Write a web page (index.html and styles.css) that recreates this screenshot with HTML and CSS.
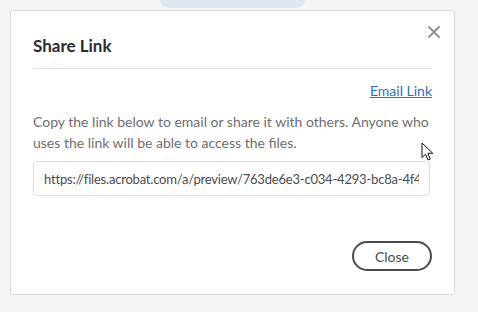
FILE: index.html
```html
<!DOCTYPE html>
<html lang="en">
<head>
    <meta charset="UTF-8">
    <title>Share Link</title>
    <link rel="stylesheet" href="styles.css">
</head>
<body>
    <div class="page">
        <div class="top-pill"></div>

        <div class="dialog">
            <button class="dialog-close" aria-label="Close">
                <svg width="12" height="12" viewBox="0 0 12 12">
                    <path d="M1 1L11 11M11 1L1 11" stroke="#8e8e8e" stroke-width="1.8" stroke-linecap="round" />
                </svg>
            </button>

            <h2 class="dialog-title">Share Link</h2>

            <div class="dialog-body">
                <div class="email-row">
                    <a href="#" class="email-link">Email Link</a>
                </div>
                <p class="hint">Copy the link below to email or share it with others. Anyone who uses the link will be able to access the files.</p>
                <input class="link-field" type="text" readonly value="https://files.acrobat.com/a/preview/763de6e3-c034-4293-bc8a-4f4b8d21c6e0">
            </div>

            <div class="dialog-footer">
                <button class="btn-close">Close</button>
            </div>

            <!-- mouse pointer from the capture -->
            <svg class="cursor" width="13" height="19" viewBox="0 0 13 19">
                <path d="M1 1V15.5L4.5 12.2L7 18L9.3 17L6.9 11.3H11.8Z" fill="#fff" stroke="#111" stroke-width="1" stroke-linejoin="round" />
            </svg>
        </div>
    </div>
</body>
</html>
```

FILE: styles.css
```css
* {
    box-sizing: border-box;
    margin: 0;
    padding: 0;
}

html, body {
    height: 100%;
}

body {
    font-family: 'Lato', 'Open Sans', sans-serif;
    background-color: #f4f4f4;
    color: #4b4b4b;
}

.page {
    position: relative;
    padding: 10px 23px 0 10px;
}

.top-pill {
    position: absolute;
    top: -10px;
    left: 160px;
    width: 145px;
    height: 18px;
    border-radius: 9px;
    background-color: #dfe7f1;
}

.dialog {
    position: relative;
    height: 285px;
    background: #fff;
    border: 1px solid #dcdcdc;
    border-radius: 3px;
    padding: 24px 22px 0 22px;
    display: flex;
    flex-direction: column;
}

.dialog-close {
    position: absolute;
    top: 15px;
    right: 14px;
    background: none;
    border: none;
    width: 12px;
    height: 12px;
    display: flex;
    cursor: pointer;
}

.dialog-title {
    font-size: 17px;
    font-weight: 700;
    color: #2c2c2c;
    line-height: 22px;
    padding-bottom: 11px;
    border-bottom: 1px solid #e1e1e1;
}

.dialog-body {
    padding-top: 12px;
}

.email-row {
    display: flex;
    justify-content: flex-end;
}

.email-link {
    font-size: 14px;
    line-height: 20px;
    color: #2d6fbf;
    text-decoration: underline;
}

.hint {
    margin-top: 10px;
    font-size: 14px;
    line-height: 21px;
    color: #6e6e6e;
}

.link-field {
    display: block;
    margin-top: 8px;
    width: 397px;
    height: 35px;
    padding: 0 10px;
    border: 1px solid #dedede;
    border-radius: 4px;
    font-family: inherit;
    font-size: 13px;
    letter-spacing: -0.2px;
    color: #4b4b4b;
    background: #fff;
    outline: none;
}

.dialog-footer {
    display: flex;
    justify-content: flex-end;
    margin-top: 45px;
}

.btn-close {
    width: 80px;
    height: 30px;
    border: 2px solid #4b4b4b;
    border-radius: 15px;
    background: #fff;
    font-family: inherit;
    font-size: 14px;
    color: #4b4b4b;
    cursor: pointer;
}

.cursor {
    position: absolute;
    left: 410px;
    top: 131px;
}
```
